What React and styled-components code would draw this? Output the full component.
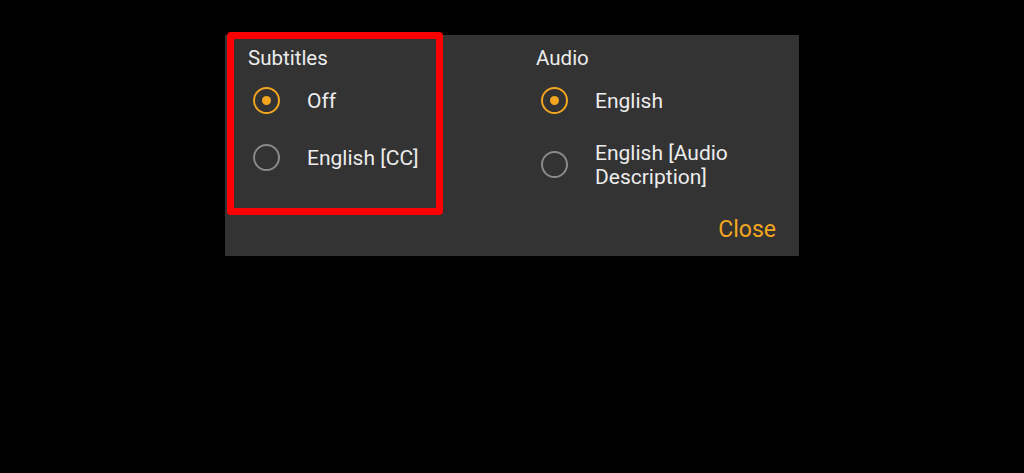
import React, { useState } from "react"
import styled, { createGlobalStyle } from "styled-components"

const GlobalStyle = createGlobalStyle`
  html, body {
    margin: 0;
    background: #000;
    font-family: Roboto, "Noto Sans", sans-serif;
  }
`

const Page = styled.div`
  min-height: 473px;
  padding: 35px 0 0 225px;
  box-sizing: border-box;
`

const Dialog = styled.div`
  position: relative;
  width: 574px;
  height: 221px;
  box-sizing: border-box;
  background: #333333;
  padding: 11px 23px 12px;
  display: flex;
  flex-direction: column;
`

const Columns = styled.div`
  display: grid;
  grid-template-columns: 288px 1fr;
  align-items: start;
`

const Group = styled.div`
  display: flex;
  flex-direction: column;
`

const Heading = styled.div`
  color: #ececec;
  font-size: 20.5px;
  line-height: 24px;
  margin-bottom: 2px;
`

const Option = styled.label`
  display: flex;
  align-items: center;
  gap: 23px;
  min-height: 57px;
  padding: 11.5px 0;
  box-sizing: border-box;
  cursor: pointer;
`

const RadioBox = styled.span`
  width: 36px;
  height: 30px;
  flex: none;
  display: flex;
  align-items: center;
  justify-content: center;
`

const Ring = styled.span`
  width: 27px;
  height: 27px;
  box-sizing: border-box;
  border-radius: 50%;
  border: 2.5px solid ${p => (p.checked ? "#f2a51f" : "#8a8a8a")};
  display: flex;
  align-items: center;
  justify-content: center;

  &::after {
    content: "";
    display: ${p => (p.checked ? "block" : "none")};
    width: 9px;
    height: 9px;
    border-radius: 50%;
    background: #f2a51f;
  }
`

const OptionText = styled.span`
  color: #ececec;
  font-size: 21px;
  line-height: 24px;
`

const Footer = styled.div`
  margin-top: auto;
  display: flex;
  justify-content: flex-end;
`

const CloseButton = styled.button`
  background: none;
  border: 0;
  padding: 0;
  color: #f2a51f;
  font-family: Roboto, "Noto Sans", sans-serif;
  font-size: 23px;
  line-height: 28px;
  cursor: pointer;
`

// annotation drawn over the screenshot
const Highlight = styled.div`
  position: absolute;
  left: 2px;
  top: -3px;
  width: 216px;
  height: 183px;
  box-sizing: border-box;
  border: 7px solid #ff0000;
  border-radius: 4px;
  pointer-events: none;
`

const RadioGroup = ({ title, options, value, onChange }) => (
  <Group>
    <Heading>{title}</Heading>
    {options.map(opt => (
      <Option key={opt} onClick={() => onChange(opt)}>
        <RadioBox>
          <Ring checked={value === opt} />
        </RadioBox>
        <OptionText>{opt}</OptionText>
      </Option>
    ))}
  </Group>
)

const App = () => {
  const [subs, setSubs] = useState("Off")
  const [audio, setAudio] = useState("English")

  return (
    <Page>
      <GlobalStyle />
      <Dialog>
        <Columns>
          <RadioGroup
            title="Subtitles"
            options={["Off", "English [CC]"]}
            value={subs}
            onChange={setSubs}
          />
          <RadioGroup
            title="Audio"
            options={["English", "English [Audio Description]"]}
            value={audio}
            onChange={setAudio}
          />
        </Columns>
        <Footer>
          <CloseButton>Close</CloseButton>
        </Footer>
        <Highlight />
      </Dialog>
    </Page>
  )
}

export default App
